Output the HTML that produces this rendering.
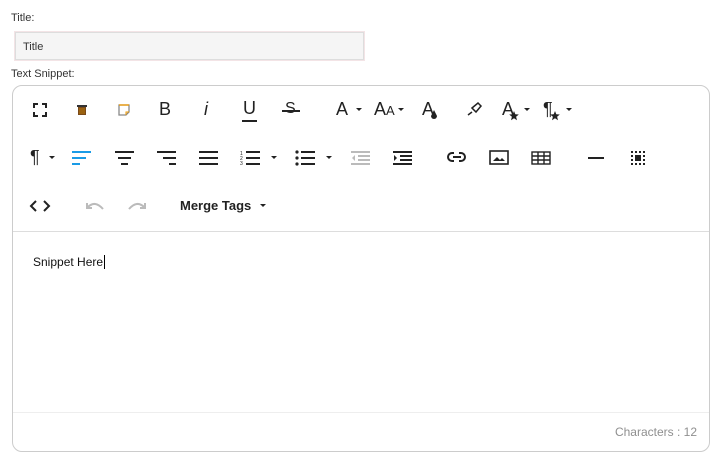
<!DOCTYPE html>
<html><head><meta charset="utf-8"><style>
body{margin:0;width:724px;height:474px;background:#fff;font-family:"Liberation Sans",Arial,sans-serif;position:relative;overflow:hidden;color:#222}
.a{position:absolute}
.lbl{font-size:11px;color:#333}
svg{position:absolute;overflow:visible}
.t{position:absolute;font-size:18px;color:#222}
.car{position:absolute;width:0;height:0;border-left:3.5px solid transparent;border-right:3.5px solid transparent;border-top:3.5px solid #222}
</style></head><body>
<div class="a lbl" style="left:11px;top:12px">Title:</div>
<div class="a" style="left:15px;top:32px;width:349px;height:28px;background:#f5f5f5;border:1px solid #ddd;outline:1px solid #f3e4e6;box-sizing:border-box"></div>
<div class="a lbl" style="left:23px;top:41px">Title</div>
<div class="a lbl" style="left:11px;top:68px">Text Snippet:</div>
<div class="a" style="left:12px;top:85px;width:698px;height:367px;border:1px solid #ccc;border-radius:10px;box-sizing:border-box"></div>
<div class="a" style="left:13px;top:231px;width:696px;height:1px;background:#ddd"></div>
<div class="a" style="left:13px;top:412px;width:696px;height:1px;background:#eee"></div>
<div class="a" style="left:33px;top:255px;font-size:12px;color:#111">Snippet Here<span style="border-left:1px solid #000;margin-left:1px"></span></div>
<div class="a" style="right:27px;top:425px;font-size:12px;color:#8f8f8f">Characters : 12</div>

<!-- row 1 -->
<svg style="left:33px;top:103px" width="14" height="14" fill="none" stroke="#222" stroke-width="2"><path d="M1 5V1h4M9 1h4v4M13 9v4H9M5 13H1V9"/></svg>
<svg style="left:77px;top:104px" width="10" height="12"><rect x="0" y="1" width="10" height="2" fill="#333"/><rect x="1" y="3" width="8" height="8" fill="#7a4a1a"/><path d="M3 4v6M5 4v6M7 4v6" stroke="#c80" stroke-width=".8"/></svg>
<svg style="left:118px;top:104px" width="12" height="12" fill="none"><path d="M1 1h10v7l-3 3H1z" stroke="#888" stroke-width="1.3"/><path d="M1 1h10" stroke="#e90" stroke-width="1.3"/><path d="M11 8H8v3" stroke="#e90"/></svg>
<div class="t" style="left:159px;top:99px">B</div>
<div class="t" style="left:204px;top:99px;font-style:italic">i</div>
<div class="t" style="left:243px;top:98px">U</div><div class="a" style="left:242px;top:120px;width:15px;height:2px;background:#222"></div>
<div class="t" style="left:285px;top:100px;font-size:16px">S</div><div class="a" style="left:282px;top:110px;width:18px;height:2px;background:#222"></div>
<div class="t" style="left:336px;top:99px">A</div><div class="car" style="left:356px;top:108px"></div>
<div class="t" style="left:374px;top:99px">A<span style="font-size:13px">A</span></div><div class="car" style="left:398px;top:108px"></div>
<div class="t" style="left:422px;top:99px">A</div><svg style="left:430px;top:110px" width="8" height="10"><path d="M4 0L7 6a3 3 0 1 1-6 0z" fill="#222"/></svg>
<svg style="left:466px;top:102px" width="16" height="14" fill="none" stroke="#222" stroke-width="1.5"><path d="M6 6l6-5 3 3-5 6zM6 6l4 4M2 13l4-3"/></svg>
<div class="t" style="left:502px;top:99px">A</div><svg style="left:509px;top:111px" width="10" height="10"><path d="M5 0l1.3 3.2 3.5.3-2.7 2.2.9 3.5L5 7.3 2 9.2l.9-3.5L.2 3.5l3.5-.3z" fill="#222"/></svg><div class="car" style="left:524px;top:108px"></div>
<div class="t" style="left:543px;top:99px">¶</div><svg style="left:550px;top:111px" width="10" height="10"><path d="M5 0l1.3 3.2 3.5.3-2.7 2.2.9 3.5L5 7.3 2 9.2l.9-3.5L.2 3.5l3.5-.3z" fill="#222"/></svg><div class="car" style="left:566px;top:108px"></div>

<!-- row 2 -->
<div class="t" style="left:30px;top:147px">¶</div><div class="car" style="left:49px;top:156px"></div>
<svg style="left:72px;top:151px" width="20" height="14" fill="#1a9be6"><rect width="19" height="2"/><rect y="6" width="14" height="2"/><rect y="12" width="8" height="2"/></svg>
<svg style="left:115px;top:151px" width="20" height="14" fill="#222"><rect width="19" height="2"/><rect x="3" y="6" width="13" height="2"/><rect x="6" y="12" width="7" height="2"/></svg>
<svg style="left:157px;top:151px" width="20" height="14" fill="#222"><rect width="19" height="2"/><rect x="6" y="6" width="13" height="2"/><rect x="12" y="12" width="7" height="2"/></svg>
<svg style="left:199px;top:151px" width="20" height="14" fill="#222"><rect width="19" height="2"/><rect y="6" width="19" height="2"/><rect y="12" width="19" height="2"/></svg>
<svg style="left:240px;top:150px" width="22" height="16" fill="#222"><rect x="6" y="1" width="14" height="2"/><rect x="6" y="7" width="14" height="2"/><rect x="6" y="13" width="14" height="2"/><text x="0" y="5" font-size="5" font-family="Liberation Sans">1</text><text x="0" y="10" font-size="5" font-family="Liberation Sans">2</text><text x="0" y="15" font-size="5" font-family="Liberation Sans">3</text></svg><div class="car" style="left:271px;top:156px"></div>
<svg style="left:295px;top:150px" width="22" height="16" fill="#222"><rect x="6" y="1" width="14" height="2"/><rect x="6" y="7" width="14" height="2"/><rect x="6" y="13" width="14" height="2"/><circle cx="2" cy="2" r="1.6"/><circle cx="2" cy="8" r="1.6"/><circle cx="2" cy="14" r="1.6"/></svg><div class="car" style="left:326px;top:156px"></div>
<svg style="left:351px;top:151px" width="20" height="14" fill="#bbb"><rect width="19" height="2"/><rect x="7" y="4" width="12" height="2"/><rect x="7" y="8" width="12" height="2"/><rect y="12" width="19" height="2"/><path d="M4 4v6L1 7z"/></svg>
<svg style="left:393px;top:151px" width="20" height="14" fill="#222"><rect width="19" height="2"/><rect x="7" y="4" width="12" height="2"/><rect x="7" y="8" width="12" height="2"/><rect y="12" width="19" height="2"/><path d="M1 4v6l3-3z"/></svg>
<svg style="left:447px;top:152px" width="20" height="12" fill="none" stroke="#222" stroke-width="2"><path d="M7 1H5a4 4 0 0 0 0 8h2M12 1h2a4 4 0 0 1 0 8h-2M6 5h8"/></svg>
<svg style="left:489px;top:150px" width="20" height="16" fill="none" stroke="#222" stroke-width="1.6"><rect x="1" y="1" width="18" height="13"/><path d="M4 11l4-4 3 3 2-2 3 3z" fill="#222" stroke="none"/></svg>
<svg style="left:531px;top:151px" width="20" height="14" fill="none" stroke="#222" stroke-width="1.4"><rect x="1" y="1" width="18" height="12"/><path d="M1 5h18M1 9h18M7 1v12M13 1v12"/></svg>
<div class="a" style="left:588px;top:157px;width:16px;height:2px;background:#222"></div>
<svg style="left:631px;top:151px" width="14" height="14" fill="#222"><path d="M0 0h2v2H0zM4 0h2v2H4zM8 0h2v2H8zM12 0h2v2h-2zM0 12h2v2H0zM4 12h2v2H4zM8 12h2v2H8zM12 12h2v2h-2zM0 4h2v2H0zM0 8h2v2H0zM12 4h2v2h-2zM12 8h2v2h-2z"/><rect x="4" y="4" width="6" height="6"/></svg>

<!-- row 3 -->
<svg style="left:30px;top:200px" width="20" height="12" fill="none" stroke="#222" stroke-width="2"><path d="M6 1L1 6l5 5M14 1l5 5-5 5"/></svg>
<svg style="left:86px;top:201px" width="18" height="10" fill="none" stroke="#bbb" stroke-width="2"><path d="M2 6q7-7 15 2"/><path d="M1 2v5h5" /></svg>
<svg style="left:128px;top:201px" width="18" height="10" fill="none" stroke="#bbb" stroke-width="2"><path d="M16 6q-7-7-15 2"/><path d="M17 2v5h-5"/></svg>
<div class="a" style="left:180px;top:198px;font-size:13px;font-weight:bold;color:#222">Merge Tags</div><div class="car" style="left:260px;top:204px"></div>
</body></html>
